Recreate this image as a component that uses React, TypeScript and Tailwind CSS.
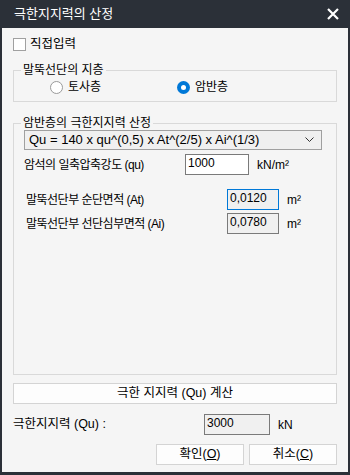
import React from 'react';

const font = { fontFamily: '"Liberation Sans", "Noto Sans CJK KR", sans-serif' };

function Radio({ checked, label }: { checked?: boolean; label: string }) {
  return (
    <label className="flex items-center gap-[5px]">
      {checked ? (
        <span className="w-[13px] h-[13px] rounded-full bg-[#0078d7] flex items-center justify-center">
          <span className="w-[5px] h-[5px] rounded-full bg-white" />
        </span>
      ) : (
        <span className="w-[13px] h-[13px] rounded-full border border-[#9a9a9a] bg-white" />
      )}
      <span>{label}</span>
    </label>
  );
}

function Field({ value, focused, white }: { value: string; focused?: boolean; white?: boolean }) {
  const border = focused ? 'border-[#0078d7]' : 'border-[#7a7a7a]';
  const bg = white ? 'bg-white' : 'bg-[#f0f0f0]';
  return (
    <div className={`h-[21px] border ${border} ${bg} px-[2px] leading-[17px] text-[12px] text-black`}>
      {value}
    </div>
  );
}

export default function App() {
  return (
    <div style={font} className="w-[350px] h-[475px] bg-[#2b3038] flex flex-col text-[12px] text-black">
      {/* Title bar */}
      <div className="h-[28px] flex items-center justify-between pl-[14px] pr-[8px]">
        <span className="text-white text-[13px]">극한지지력의 산정</span>
        <svg width="14" height="14" viewBox="0 0 14 14" className="mr-[2px]">
          <path d="M2 2 L12 12 M12 2 L2 12" stroke="white" strokeWidth="2.2" />
        </svg>
      </div>

      {/* Body */}
      <div className="flex-1 mx-[2px] mb-[3px] bg-[#f5f5f5] flex flex-col px-[11px]">
        {/* 직접입력 */}
        <label className="flex items-center gap-[4px] mt-[9px] h-[14px]">
          <span className="w-[13px] h-[13px] border border-[#a0a0a0] bg-white" />
          <span className="text-[12.5px]">직접입력</span>
        </label>

        {/* 지층 group */}
        <fieldset className="mt-[11px] border border-[#d9d9d9] px-[7px] h-[40px]">
          <legend className="px-[2px] leading-[16px]">말뚝선단의 지층</legend>
          <div className="flex items-center h-[22px] -mt-[2px]">
            <div className="w-[156px] pl-[29px]">
              <Radio label="토사층" />
            </div>
            <Radio checked label="암반층" />
          </div>
        </fieldset>

        {/* 극한지지력 산정 group */}
        <fieldset className="mt-[13px] border border-[#d9d9d9] pl-[10px] pr-[14px] h-[260px]">
          <legend className="-ml-[3px] px-[2px] leading-[16px]">암반층의 극한지지력 산정</legend>

          <div className="h-[20px] border border-[#a0a0a0] bg-[#f0f0f0] flex items-center justify-between pl-[4px] pr-[7px] mt-[-1px]">
            <span className="text-[13px]">Qu = 140 x qu^(0,5) x At^(2/5) x Ai^(1/3)</span>
            <svg width="9" height="6" viewBox="0 0 9 6">
              <path d="M0.5 0.5 L4.5 4.5 L8.5 0.5" fill="none" stroke="#333" strokeWidth="1" />
            </svg>
          </div>

          <div className="flex items-center mt-[4px]">
            <span className="w-[161px] text-[12px] tracking-[-0.5px]">암석의 일축압축강도 (qu)</span>
            <div className="w-[64px]">
              <Field value="1000" white />
            </div>
            <span className="ml-[8px]">kN/m²</span>
          </div>

          <div className="flex items-center mt-[14px] pl-[2px]">
            <span className="w-[201px] text-[12px] tracking-[-0.5px]">말뚝선단부 순단면적 (At)</span>
            <div className="w-[52px]">
              <Field value="0,0120" focused />
            </div>
            <span className="ml-[8px]">m²</span>
          </div>

          <div className="flex items-center mt-[3px] pl-[2px]">
            <span className="w-[201px] text-[12px] tracking-[-0.5px]">말뚝선단부 선단심부면적 (Ai)</span>
            <div className="w-[52px]">
              <Field value="0,0780" />
            </div>
            <span className="ml-[8px]">m²</span>
          </div>
        </fieldset>

        {/* 계산 버튼 */}
        <button className="mt-[8px] h-[21px] border border-[#d4d4d4] bg-[#fdfdfd] text-[12.5px]">
          극한 지지력 (Qu) 계산
        </button>

        {/* 결과 */}
        <div className="flex items-center mt-[10px]">
          <span className="w-[191px] text-[12.5px]">극한지지력 (Qu) :</span>
          <div className="w-[66px]">
            <Field value="3000" />
          </div>
          <span className="ml-[8px]">kN</span>
        </div>

        {/* 확인 / 취소 */}
        <div className="flex justify-end gap-[5px] mt-[9px]">
          <button className="w-[88px] h-[21px] border border-[#d4d4d4] bg-[#fdfdfd] text-[12.5px]">
            확인(<span className="underline">O</span>)
          </button>
          <button className="w-[88px] h-[21px] border border-[#d4d4d4] bg-[#fdfdfd] text-[12.5px]">
            취소(<span className="underline">C</span>)
          </button>
        </div>
      </div>
    </div>
  );
}
